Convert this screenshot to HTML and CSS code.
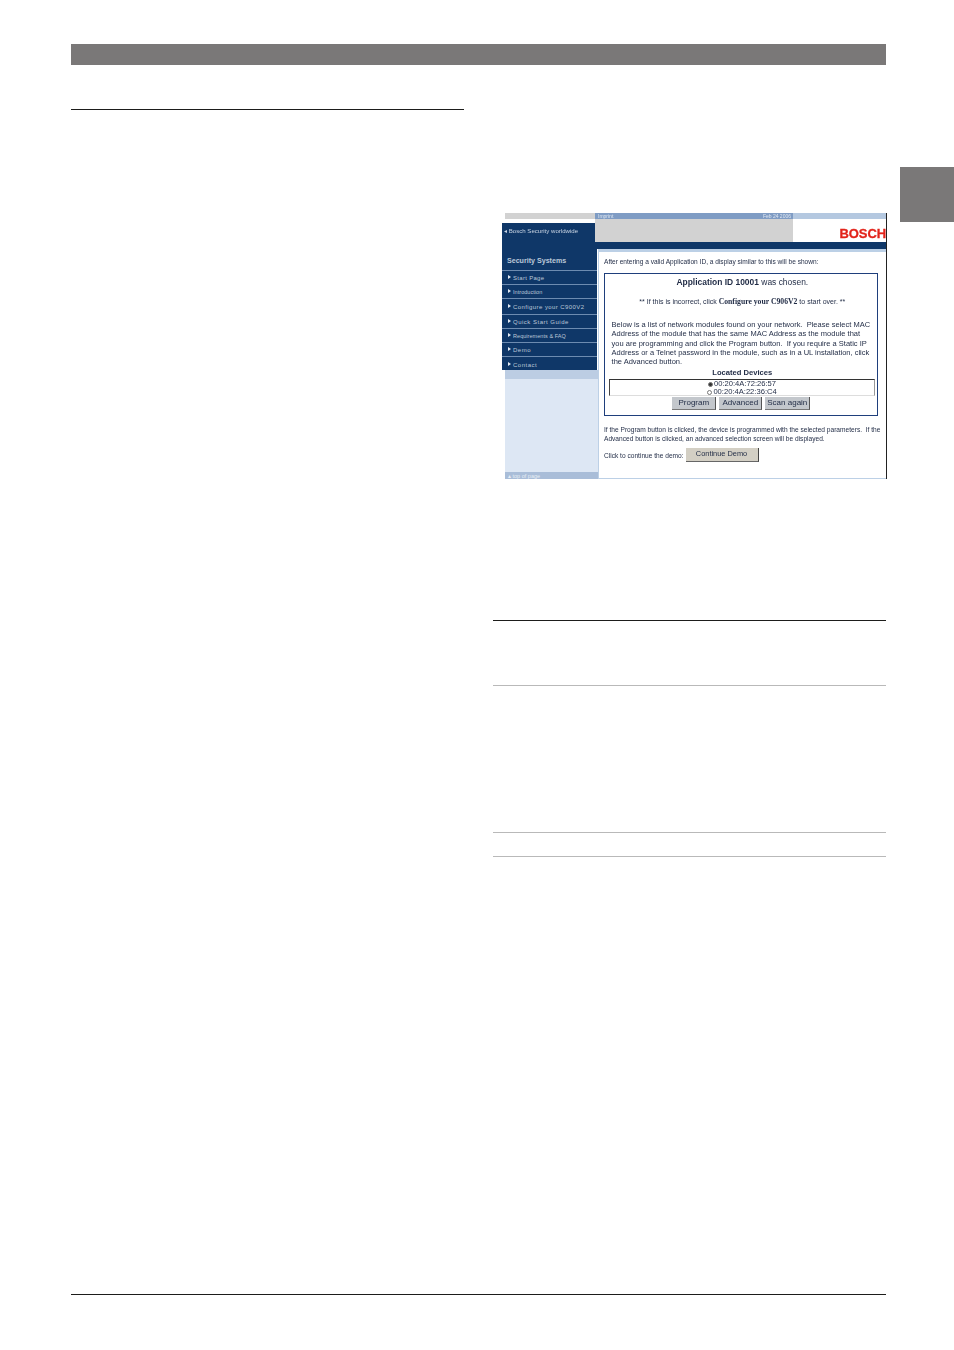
FILE: index.html
```html
<!DOCTYPE html>
<html lang="en">
<head>
<meta charset="utf-8">
<title>Configure your C900V2</title>
<link rel="stylesheet" href="styles.css">
</head>
<body>
<div class="page">
  <div class="head-bar"></div>
  <div class="side-tab"></div>
  <div class="columns">
    <div class="col-left"><div class="rule-black"></div></div>
    <div class="col-right">
      <div class="shot">
        <div class="strip">
          <div class="strip-a"></div>
          <div class="strip-b"><span>Imprint</span><span>Feb 24 2006</span></div>
          <div class="strip-c"></div>
        </div>
        <div class="banner">
          <div class="world">◂ Bosch Security worldwide</div>
          <div class="banner-grey"></div>
          <div class="logo">BOSCH</div>
        </div>
        <div class="navy-band"></div>
        <div class="shot-body">
          <div class="sidebar">
            <nav class="menu">
              <div class="menu-title">Security Systems</div>
              <div class="menu-item h14"><i></i>Start Page</div>
              <div class="menu-item h14 tiny"><i></i>Introduction</div>
              <div class="menu-item h16 wide"><i></i>Configure your C900V2</div>
              <div class="menu-item h14 quick"><i></i>Quick Start Guide</div>
              <div class="menu-item h14 tiny"><i></i>Requirements &amp; FAQ</div>
              <div class="menu-item h14 quick"><i></i>Demo</div>
              <div class="menu-item h14 quick"><i></i>Contact</div>
            </nav>
            <div class="side-band"></div>
            <div class="side-pale"></div>
            <div class="side-top">▴ top of page</div>
          </div>
          <div class="main">
            <p class="lead">After entering a valid Application ID, a display similar to this will be shown:</p>
            <div class="dialog">
              <div class="dlg-title"><b>Application ID 10001</b> was chosen.</div>
              <div class="dlg-note">** If this is incorrect, click <b>Configure your C906V2</b> to start over. **</div>
              <p class="dlg-text">Below is a list of network modules found on your network.&nbsp; Please select MAC<br>Address of the module that has the same MAC Address as the module that<br>you are programming and click the Program button.&nbsp; If you require a Static IP<br>Address or a Telnet password in the module, such as in a UL installation, click<br>the Advanced button.</p>
              <div class="dlg-sub">Located Devices</div>
              <div class="devices">
                <div class="device"><span class="radio on"></span>00:20:4A:72:26:57</div>
                <div class="device"><span class="radio"></span>00:20:4A:22:36:C4</div>
              </div>
              <div class="btns">
                <span class="btn b-prog">Program</span>
                <span class="btn b-adv">Advanced</span>
                <span class="btn b-scan">Scan again</span>
              </div>
            </div>
            <p class="after">If the Program button is clicked, the device is programmed with the selected parameters.&nbsp; If the<br>Advanced button is clicked, an advanced selection screen will be displayed.</p>
            <div class="cont"><span>Click to continue the demo:</span><span class="btn-cont">Continue Demo</span></div>
          </div>
        </div>
      </div>
      <div class="table">
        <div class="t-head"></div>
        <div class="t-row1"></div>
        <div class="t-row2"></div>
      </div>
    </div>
  </div>
  <div class="foot-rule"></div>
</div>
</body>
</html>
```
FILE: styles.css
```css
* { box-sizing: border-box; }
html, body { margin: 0; padding: 0; background: #fff; }
body { font-family: "Liberation Sans", Arial, sans-serif; }
.page { width: 954px; height: 1350px; padding: 44px 68px 0 71px; position: relative; overflow: hidden; }
.head-bar { height: 21px; background: #7a7878; }
.side-tab { position: absolute; left: 900px; top: 167px; width: 54px; height: 55px; background: #7a7878; }
.columns { display: flex; gap: 29px; height: 1229px; }
.col-left { width: 393px; padding-top: 44px; }
.rule-black { height: 1px; background: #1d1d1b; }
.col-right { width: 393px; padding-top: 148px; }

.shot { width: 385px; height: 266px; margin-left: 9px; display: flex; flex-direction: column; border-right: 1px solid #222; overflow: hidden; color: #1f2a44; filter: blur(.45px); }
.strip { display: flex; height: 6px; flex: none; }
.strip-a { width: 90px; margin-left: 3px; background: #d2d2d2; }
.strip-b { width: 198px; padding: 0 2px 0 3px; background: #7f9cc4; color: #dfe7f2; font-size: 5px; line-height: 6px; display: flex; justify-content: space-between; }
.strip-c { flex: 1; background: #b4c8e0; }
.banner { display: flex; height: 23px; flex: none; }
.world { width: 93px; margin-top: 4px; background: #0f3768; color: #c9d4e3; font-size: 6.1px; line-height: 16px; padding-left: 2px; white-space: nowrap; }
.banner-grey { width: 198px; background: #d2d2d2; }
.logo { flex: 1; background: #fff; color: #e2231a; font-weight: 700; font-size: 13px; line-height: 14px; padding-top: 8px; text-align: right; white-space: nowrap; overflow: hidden; letter-spacing: -.1px; -webkit-text-stroke: .3px #e2231a; }
.navy-band { height: 7px; background: #0f3768; flex: none; }
.shot-body { display: flex; flex: 1; min-height: 0; }
.sidebar { width: 96px; display: flex; flex-direction: column; flex: none; }
.menu { background: #0f3768; color: #bcc8d8; height: 121px; flex: none; margin-right: 1px; }
.menu-title { height: 22px; padding: 8px 0 0 5px; font-size: 7.1px; line-height: 9px; font-weight: 700; border-bottom: 1px solid #6d8bb0; white-space: nowrap; }
.menu-item { font-size: 6px; line-height: 15px; padding-left: 6px; border-bottom: 1px solid #6d8bb0; white-space: nowrap; letter-spacing: .3px; }
.menu-item:last-child { border-bottom: 0; line-height: 16px; }
.menu-item i { display: inline-block; width: 0; height: 0; border-left: 3px solid #e4eaf2; border-top: 2px solid transparent; border-bottom: 2px solid transparent; margin-right: 2px; vertical-align: 1px; }
.h14 { height: 14px; }
.h16 { height: 16px; line-height: 17px; }
.tiny { font-size: 5.5px; letter-spacing: .05px; }
.wide { letter-spacing: .42px; }
.quick { letter-spacing: .5px; }
.side-band { height: 9px; background: #bccde3; margin-left: 3px; flex: none; }
.side-pale { flex: 1; background: #dde7f4; margin-left: 3px; }
.side-top { height: 7px; background: #a9bdd8; margin-left: 3px; color: #e7edf5; font-size: 5.5px; line-height: 8px; padding-left: 3px; overflow: hidden; flex: none; }
.main { flex: 1; min-width: 0; border-top: 3px solid #bcd0e6; border-left: 1px solid #bcd0e6; border-bottom: 1px solid #bcd0e6; padding: 5px 0 0 5px; overflow: hidden; }
.lead { margin: 0; font-size: 6.57px; line-height: 9px; white-space: nowrap; }
.dialog { width: 274px; height: 143px; margin-top: 7px; border: 1.4px solid #1f3f7c; padding: 0 4px 0 6.6px; white-space: nowrap; }
.dlg-title { text-align: center; font-size: 8.45px; line-height: 12px; margin-top: 2px; }
.dlg-note { text-align: center; font-size: 7px; line-height: 9px; margin-top: 9px; }
.dlg-note b { font-family: "Liberation Serif", serif; font-size: 7.7px; }
.dlg-text { margin: 14px 0 0; font-size: 7.5px; line-height: 9.3px; }
.dlg-sub { text-align: center; font-size: 7.6px; line-height: 9px; font-weight: 700; margin-top: 2px; }
.devices { height: 17px; margin: 2px -2px 0 -3px; border-top: 1.3px solid #333; border-left: 1px solid #444; border-right: 1px solid #999; border-bottom: 1px solid #ddd; }
.device { font-size: 7.6px; line-height: 8px; display: flex; justify-content: center; align-items: center; gap: 1.5px; height: 8px; }
.radio { width: 5px; height: 5px; border-radius: 50%; border: 1px solid #777; background: #fff; flex: none; }
.radio.on { background: #333; }
.btns { display: flex; justify-content: center; gap: 3px; margin-top: 1px; padding-right: 2px; }
.btn { height: 13px; background: #c3c7cc; border-right: 1px solid #555; border-bottom: 1px solid #777; font-size: 8px; line-height: 12px; text-align: center; white-space: nowrap; }
.b-prog { width: 44px; }
.b-adv { width: 43px; }
.b-scan { width: 45px; }
.after { margin: 10px 0 0; font-size: 6.6px; line-height: 8.7px; white-space: nowrap; }
.cont { display: flex; align-items: center; gap: 2px; margin-top: 5px; font-size: 6.6px; white-space: nowrap; }
.btn-cont { width: 73px; height: 14px; background: #d3cfc4; border-right: 1px solid #444; border-bottom: 1px solid #666; font-size: 7.4px; line-height: 12px; text-align: center; }

.table { margin-top: 141px; }
.t-head { height: 65px; border-top: 1px solid #1d1d1b; }
.t-row1 { height: 147px; border-top: 1px solid #b9b9b9; }
.t-row2 { height: 25px; border-top: 1px solid #b9b9b9; border-bottom: 1px solid #b9b9b9; }
.foot-rule { height: 1px; background: #1d1d1b; }
```
